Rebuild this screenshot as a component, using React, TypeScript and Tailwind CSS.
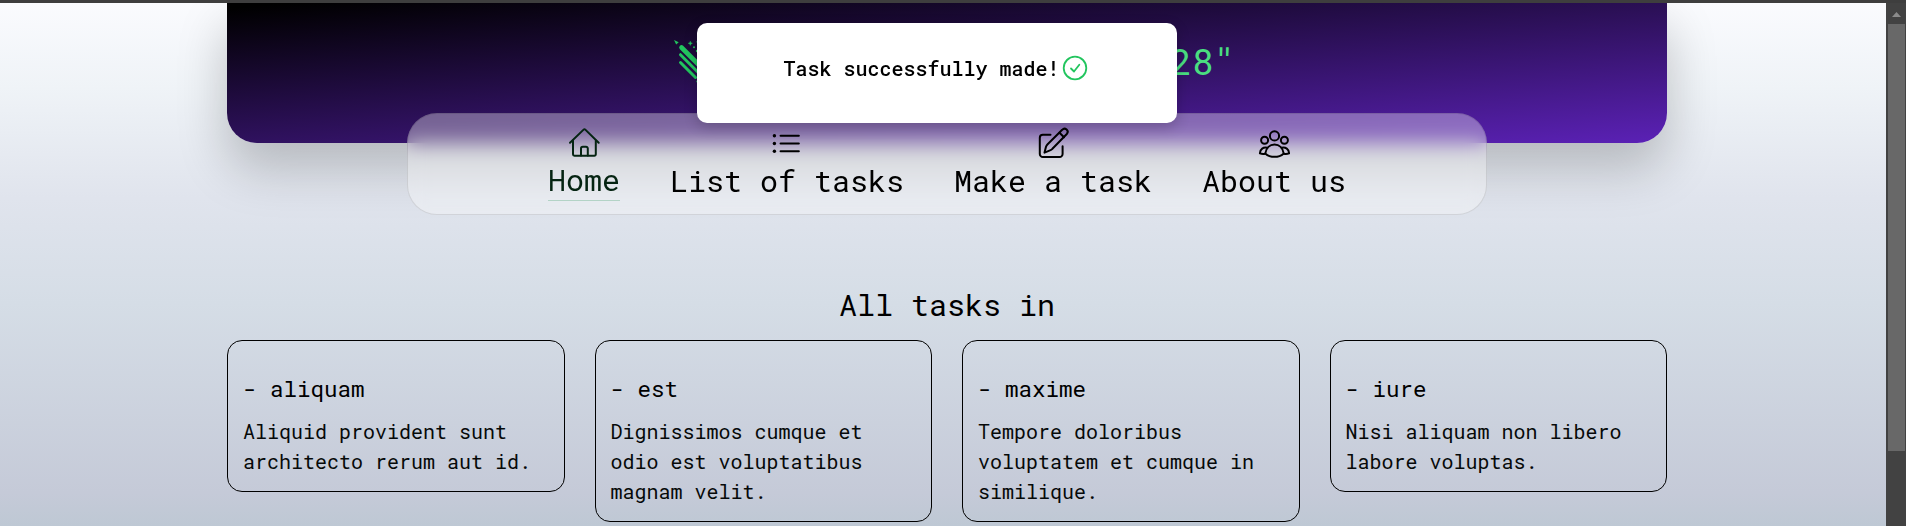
import type { ReactNode } from "react";

const tasks = [
  { title: "aliquam", text: "Aliquid provident sunt architecto rerum aut id." },
  { title: "est", text: "Dignissimos cumque et odio est voluptatibus magnam velit." },
  { title: "maxime", text: "Tempore doloribus voluptatem et cumque in similique." },
  { title: "iure", text: "Nisi aliquam non libero labore voluptas." },
];

function Icon({ children }: { children: ReactNode }) {
  return (
    <svg
      className="h-9 w-9 shrink-0"
      viewBox="0 0 36 36"
      fill="none"
      stroke="currentColor"
      strokeWidth="2"
      strokeLinecap="round"
      strokeLinejoin="round"
    >
      {children}
    </svg>
  );
}

const HomeIcon = () => (
  <Icon>
    <path d="M4 16.7 17.6 3.6a1.200 1.200 0 0 1 1.700 0L32.7 16.7" />
    <path d="M7 14.500V28.300a1.400 1.400 0 0 0 1.400 1.400H28.400a1.400 1.400 0 0 0 1.400-1.400V14.500" />
    <path d="M15 29.500V22.500a1.800 1.800 0 0 1 1.800-1.800h3.200a1.800 1.800 0 0 1 1.800 1.800v7" />
  </Icon>
);

const ListIcon = () => (
  <Icon>
    <path d="M11.6 9.8H29.8M11.6 17.500H29.8M11.6 25.2H29.8" strokeWidth="2.100" />
    <g fill="currentColor" stroke="none">
      <circle cx="5.4" cy="9.8" r="1.700" />
      <circle cx="5.4" cy="17.500" r="1.700" />
      <circle cx="5.4" cy="25.2" r="1.700" />
    </g>
  </Icon>
);

const EditIcon = () => (
  <Icon>
    <path d="M15.500 8.7H7.8a3 3 0 0 0-3 3V28a3 3 0 0 0 3 3H24.600a3 3 0 0 0 3-3V20.300" />
    <path d="M9.500 26.600l1.500-5.800a6 6 0 0 1 1.600-2.600L27.200 3.800a3 3 0 0 1 4.600 4.200L17.400 22.800a6 6 0 0 1-2.400 1.600z" />
    <path d="M24.500 6.700l4.500 4.500" />
  </Icon>
);

const UsersIcon = () => (
  <Icon>
    <circle cx="18.500" cy="9.9" r="4.600" />
    <circle cx="8.600" cy="14.300" r="3.500" />
    <circle cx="28.400" cy="14.300" r="3.500" />
    <path d="M9.300 27.400C10.200 22 13.800 18.600 18.500 18.600s8.300 3.400 9.200 8.800c-5 4.600-13.400 4.600-18.400 0z" />
    <path d="M11.400 21.800C7.200 21 4.200 23 3.900 27.300c1.600.6 3.200.8 5.200.4M25.600 21.800c4.200-.8 7.200 1.200 7.500 5.500-1.600.6-3.200.8-5.200.4" />
  </Icon>
);

const PencilsIcon = () => (
  <svg className="h-[48px] w-[48px] shrink-0 text-[#22c55e]" viewBox="0 0 48 48" fill="currentColor">
    <path d="M7 3l4.700 2.300-2.500 2.300z" />
    <path d="M14.500 10.500 36 32" stroke="currentColor" strokeWidth="4.600" strokeLinecap="round" />
    <path d="M13.500 17.700 34 38.200M13.500 25.500 28.500 40.500" stroke="currentColor" strokeWidth="3" strokeLinecap="round" />
    <path d="M23.300 4.200l.6 1.500 1.500.6-1.500.6-.6 1.500-.6-1.500-1.500-.6 1.500-.6z" stroke="currentColor" strokeWidth=".4" />
    <circle cx="27" cy="10.200" r="1" />
    <circle cx="30" cy="14" r="1.200" />
    <circle cx="30.300" cy="4.800" r=".9" />
    <circle cx="30.300" cy="44.500" r="1" />
  </svg>
);

function NavItem({ label, icon, active }: { label: string; icon: ReactNode; active?: boolean }) {
  return (
    <a className={active ? "flex flex-col items-center text-[#052412]" : "flex flex-col items-center text-black"}>
      {icon}
      <span
        className={
          active
            ? "block h-[39px] border-b border-[#b3d3c6] text-3xl leading-9"
            : "block h-[39px] text-3xl leading-[38px]"
        }
      >
        {label}
      </span>
    </a>
  );
}

export default function App() {
  return (
    <div className="relative flex h-[526px] w-[1906px] flex-col overflow-hidden bg-[#3e3e3e] font-['Roboto_Mono','Liberation_Mono',monospace] text-black">
      <div className="mt-[3px] flex min-h-0 flex-1">
        <main className="w-[1886px] overflow-hidden bg-[linear-gradient(180deg,#fafbfe_0px,#eff3f7_85px,#e0e4ed_195px,#d5dde6_300px,#c5cad8_490px,#bec8d4_523px)] pl-[227px]">
          <div className="w-[1440px]">
            <header className="flex h-[140px] justify-center rounded-b-[30px] bg-[linear-gradient(175deg,#000_2%,#5b21b6_100%)] pt-[34px] shadow-[0_25px_50px_0_rgba(0,0,0,0.22)]">
              <div className="flex w-[560px] justify-between">
                <PencilsIcon />
                <span className="-mr-2 text-4xl leading-[48px] text-[#4ade80]">28"</span>
              </div>
            </header>
            <nav className="relative mx-auto -mt-[30px] flex h-[102px] w-[1080px] justify-center gap-[50px] rounded-[30px] border border-black/10 bg-white/35 pt-3 backdrop-blur-[10px]">
              <NavItem label="Home" icon={<HomeIcon />} active />
              <NavItem label="List of tasks" icon={<ListIcon />} />
              <NavItem label="Make a task" icon={<EditIcon />} />
              <NavItem label="About us" icon={<UsersIcon />} />
            </nav>
            <h1 className="mt-[72px] h-[53px] text-center text-3xl leading-9">All tasks in</h1>
            <div className="grid grid-cols-4 items-start gap-[30px]">
              {tasks.map((t) => (
                <article key={t.title} className="rounded-[15px] border border-black px-[15px] pt-[29px] pb-[15px]">
                  <h2 className="mb-[10px] text-[22.500px] leading-[36px]">- {t.title}</h2>
                  <p className="text-xl leading-[30px] text-[#060909]">{t.text}</p>
                </article>
              ))}
            </div>
          </div>
        </main>
        <aside className="flex w-5 flex-col bg-[#424242] pr-px pl-0.5">
          <svg className="h-[21px] w-[17px]" viewBox="0 0 17 21">
            <path d="M4 14 8.500 9 13 14z" fill="#8b8b8b" />
          </svg>
          <div className="h-[427px] w-[17px] bg-[#686868]" />
        </aside>
      </div>
      <div
        role="status"
        className="absolute top-[23px] left-[697px] flex h-[100px] w-[480px] items-center rounded-[10px] bg-white pb-[10px] pl-[86.500px] shadow-[0_4px_14px_rgba(0,0,0,0.2)]"
      >
        <span className="text-xl leading-[30px] font-medium">Task successfully made!</span>
        <svg className="ml-[2.500px] h-[26px] w-[26px] text-[#22c55e]" viewBox="0 0 26 26" fill="none" stroke="currentColor" strokeWidth="1.800" strokeLinecap="round" strokeLinejoin="round">
          <circle cx="13" cy="13" r="11.300" />
          <path d="M9 13.500 12 16.500 17.300 9.700" />
        </svg>
      </div>
    </div>
  );
}
